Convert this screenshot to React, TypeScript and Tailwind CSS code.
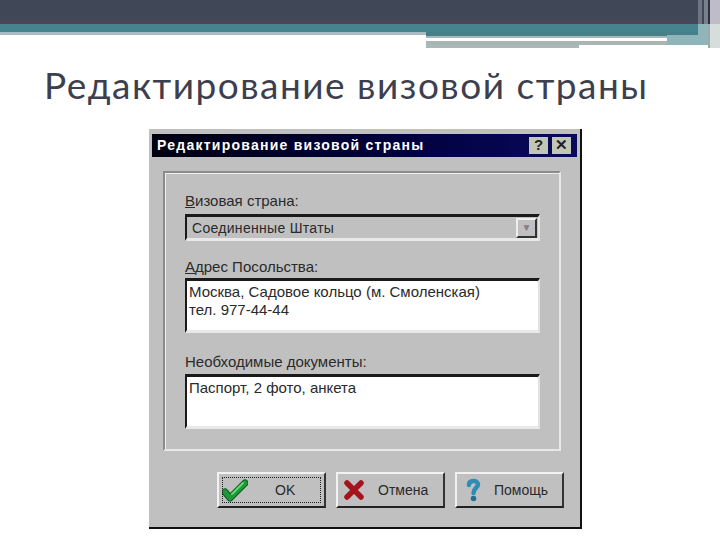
import * as React from 'react';

const ui = "font-['Liberation_Sans',Arial,sans-serif]";

function CheckIcon() {
  return (
    <svg width="26" height="24" viewBox="0 0 26 24" aria-hidden="true">
      <path d="M3 14 L8 20 L23 5" fill="none" stroke="#0b5a22" strokeWidth="7" strokeLinecap="round" strokeLinejoin="round" />
      <path d="M3 14 L8 20 L23 5" fill="none" stroke="#1c9a3a" strokeWidth="5" strokeLinecap="round" strokeLinejoin="round" />
      <path d="M10 16 L21 5" fill="none" stroke="#63d86a" strokeWidth="2" strokeLinecap="round" />
    </svg>
  );
}

function CrossIcon() {
  return (
    <svg width="20" height="20" viewBox="0 0 20 20" aria-hidden="true">
      <path d="M3 3 L17 17 M17 3 L3 17" fill="none" stroke="#a3141c" strokeWidth="5.500" strokeLinecap="round" />
    </svg>
  );
}

function HelpIcon() {
  return (
    <svg width="15" height="24" viewBox="0 0 15 24" aria-hidden="true">
      <path d="M3 7 C3 4 5 3 7.500 3 C10 3 12 4.500 12 6.500 C12 9.500 7.500 10 7.500 15" fill="none" stroke="#2f8cb5" strokeWidth="4.500" strokeLinecap="round" />
      <circle cx="7.500" cy="20.500" r="2.800" fill="#1f6f96" />
    </svg>
  );
}

function Field({ className, children }: { className?: string; children?: React.ReactNode }) {
  return (
    <div className={`w-[355px] border-2 border-t-[3px] border-[#1a1a1a] border-r-[#e2e2e2] border-b-[3px] border-b-[#e8e8e8] pl-[2px] text-[15px] leading-[18px] text-[#2a2a2a] ${className ?? ''}`}>
      {children}
    </div>
  );
}

function DialogButton({ icon, label, labelClass, focused }: { icon: React.ReactNode; label: string; labelClass: string; focused?: boolean }) {
  return (
    <div className={`relative flex h-[36px] w-[109px] items-center border-2 border-t-[#f2f2f2] border-l-[#f2f2f2] border-r-[#333] border-b-[#222] bg-[#c0c0c0] text-[14px] text-[#2a2a2a] ${focused ? 'border-t-[#222] border-l-[#222]' : ''}`}>
      <span className="flex w-[32px] justify-center">{icon}</span>
      <span className={labelClass}>{label}</span>
      {focused && <span className="absolute inset-[3px] border border-dotted border-[#222]" />}
    </div>
  );
}

function TitleButton({ children }: { children: React.ReactNode }) {
  return (
    <span className="flex h-[17px] w-[19px] items-center justify-center bg-[#c2c6b8] text-[15px] font-bold text-[#222]">
      {children}
    </span>
  );
}

function HeaderBand() {
  return (
    <header className="flex h-[48px]">
      <div className="flex flex-1 flex-col">
        <div className="h-[20px] bg-[#404756]" />
        <div className="h-[4px] bg-[#4a4558]" />
        <div className="h-[8px] bg-[#45838d]" />
        <div className="flex">
          <div className="h-[3px] w-[426px] bg-[#a9bcc2]" />
          <div className="flex flex-1">
            <div className="flex w-[241px] flex-col">
              <div className="h-[4px] bg-[#45808a]" />
              <div className="h-[2px] bg-[#a8b8b8]" />
              <div className="h-[3px]" />
              <div className="h-[4px] bg-[#a9b5b3]" />
              <div className="h-[3px] w-[153px] bg-[#a9b8b8]" />
            </div>
            <div className="flex flex-1 flex-col">
              <div className="h-[3px] bg-[#45808a]" />
              <div className="h-[10px] bg-[#8fb4ba]" />
            </div>
          </div>
        </div>
      </div>
      <div className="flex w-[10px] flex-col">
        <div className="flex h-[24px]">
          <div className="w-[4px] bg-[#6d7482]" />
          <div className="w-[2px] bg-[#404756]" />
          <div className="w-[4px] bg-[#7a7f8d]" />
        </div>
        <div className="h-[21px] bg-[#8fb4ba]" />
      </div>
      <div className="flex w-[2px] flex-col">
        <div className="h-[24px] bg-[#2d3242]" />
        <div className="h-[24px] bg-[#a0a8a8]" />
      </div>
      <div className="flex w-[10px] flex-col">
        <div className="h-[24px] bg-[#bdbcc8]" />
        <div className="h-[24px] bg-[#d5dedd]" />
      </div>
    </header>
  );
}

export default function App() {
  return (
    <div className={`h-[540px] w-[720px] overflow-hidden bg-white ${ui}`}>
      <HeaderBand />

      <h1 className="pl-[44px] pt-[15px] font-['Lato',sans-serif] text-[37px] leading-[44px] tracking-[1.5px] text-[#3d3f4e]">
        Редактирование визовой страны
      </h1>

      <div className="ml-[149px] mt-[22px] h-[400px] w-[433px] border-r-[2px] border-b-[2px] border-[#111] bg-[#c0c0c0] pl-[3px] pr-[3px] pt-[5px]">
        <div className="flex h-[23px] items-center justify-between bg-[linear-gradient(90deg,#000010,#000040_60%,#0a0a5c)] pl-[5px] pr-[6px]">
          <span className="text-[14px] font-bold tracking-[1.25px] text-white">Редактирование визовой страны</span>
          <div className="flex gap-[4px]">
            <TitleButton>?</TitleButton>
            <TitleButton>✕</TitleButton>
          </div>
        </div>

        <div className="ml-[11px] mt-[14px] h-[280px] w-[398px] border-2 border-[#e8e8e8] border-t-[#8c8c8c] border-l-[#8c8c8c] pl-[20px] pt-[19px] text-[15px] text-[#2a2a2a] shadow-[inset_1px_1px_0_#eeeeee]">
          <div className="leading-[18px]"><u>В</u>изовая страна:</div>
          <Field className="mt-[4px] flex h-[27px] items-center justify-between bg-[#c0c0c0] pl-[5px] pr-[1px]">
            <span className="text-[14px] tracking-[0.3px]">Соединенные Штаты</span>
            <span className="flex h-[20px] w-[21px] items-center justify-center border-2 border-t-[#eee] border-l-[#eee] border-r-[#333] border-b-[#333] bg-[#c0c0c0] text-[10px] text-[#808080]">▼</span>
          </Field>
          <div className="mt-[17px] leading-[18px]"><u>А</u>дрес Посольства:</div>
          <Field className="mt-[2px] h-[55px] bg-white pt-[2px]">
            Москва, Садовое кольцо (м. Смоленская)
            <br />
            тел. 977-44-44
          </Field>
          <div className="mt-[20px] leading-[18px]">Необходимые <u>д</u>окументы:</div>
          <Field className="mt-[3px] h-[55px] bg-white pt-[2px]">Паспорт, 2 фото, анкета</Field>
        </div>

        <div className="ml-[65px] mt-[21px] flex gap-[10px]">
          <DialogButton icon={<CheckIcon />} label="OK" labelClass="pl-[24px]" focused />
          <DialogButton icon={<CrossIcon />} label="Отмена" labelClass="pl-[8px]" />
          <DialogButton icon={<HelpIcon />} label="Помощь" labelClass="pl-[5px]" />
        </div>
      </div>
    </div>
  );
}
